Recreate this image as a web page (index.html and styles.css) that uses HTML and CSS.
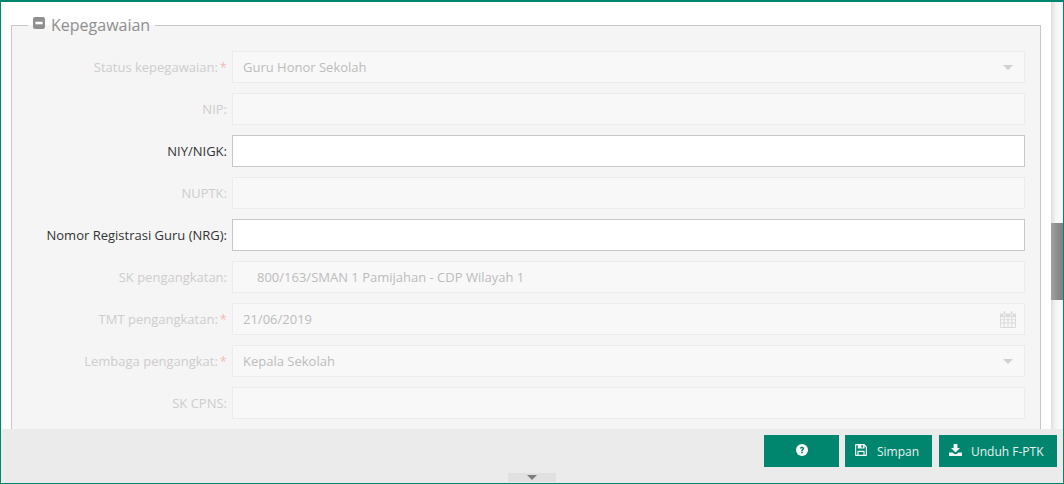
FILE: index.html
```html
<!DOCTYPE html>
<html lang="id">
<head>
<meta charset="utf-8">
<title>Kepegawaian</title>
<link rel="stylesheet" href="styles.css">
</head>
<body>
<div class="frame">
  <div class="content">
    <div class="scroll-area">
      <fieldset class="panel">
        <legend class="panel-legend">
          <svg class="legend-icon" viewBox="0 0 12 12"><rect width="12" height="12" rx="2.2" fill="#8f8f8f"/><rect x="2.4" y="4.7" width="7.2" height="2.6" fill="#fff"/></svg>
          <span>Kepegawaian</span>
        </legend>
        <div class="row off"><label class="lbl">Status kepegawaian:<i class="req">*</i></label><div class="field">Guru Honor Sekolah<svg class="caret" viewBox="0 0 10 5"><path d="M0 0H10L5 5Z"/></svg></div></div>
        <div class="row off"><label class="lbl">NIP:</label><div class="field"></div></div>
        <div class="row"><label class="lbl">NIY/NIGK:</label><input class="field live" type="text"></div>
        <div class="row off"><label class="lbl">NUPTK:</label><div class="field"></div></div>
        <div class="row"><label class="lbl">Nomor Registrasi Guru (NRG):</label><input class="field live" type="text"></div>
        <div class="row off"><label class="lbl">SK pengangkatan:</label><div class="field indent">800/163/SMAN 1 Pamijahan - CDP Wilayah 1</div></div>
        <div class="row off"><label class="lbl">TMT pengangkatan:<i class="req">*</i></label><div class="field">21/06/2019<svg class="cal" viewBox="0 0 16 17"><path fill="#dadada" fill-rule="evenodd" d="M1.2 2.5H3V4.5H6V2.5H10V4.5H13V2.5H14.8A1.2 1.2 0 0 1 16 3.7V15.8A1.2 1.2 0 0 1 14.8 17H1.2A1.2 1.2 0 0 1 0 15.8V3.7A1.2 1.2 0 0 1 1.2 2.5ZM1 6V8.2H3.6V6ZM4.6 6V8.2H7.5V6ZM8.5 6V8.2H11.4V6ZM12.4 6V8.2H15V6ZM1 9.2V11.6H3.6V9.2ZM4.6 9.2V11.6H7.5V9.2ZM8.5 9.2V11.6H11.4V9.2ZM12.4 9.2V11.6H15V9.2ZM1 12.6V16H3.6V12.6ZM4.6 12.6V16H7.5V12.6ZM8.5 12.6V16H11.4V12.6ZM12.4 12.6V16H15V12.6Z"/><rect x="3.6" y="0" width="1.8" height="4" rx=".8" fill="#dadada"/><rect x="10.6" y="0" width="1.8" height="4" rx=".8" fill="#dadada"/></svg></div></div>
        <div class="row off"><label class="lbl">Lembaga pengangkat:<i class="req">*</i></label><div class="field">Kepala Sekolah<svg class="caret" viewBox="0 0 10 5"><path d="M0 0H10L5 5Z"/></svg></div></div>
        <div class="row off"><label class="lbl">SK CPNS:</label><div class="field"></div></div>
      </fieldset>
    </div>
    <div class="scrollbar"><div class="thumb"></div></div>
  </div>
  <footer class="actions">
    <div class="buttons">
      <button class="btn btn-help" type="button"><svg class="ico" viewBox="0 0 12 12"><circle cx="6" cy="6" r="6" fill="#fff"/><path d="M3.9 4.5C4 3.3 4.9 2.7 6 2.7S8.1 3.4 8.1 4.4C8.1 5.7 6.7 5.7 6.7 7H5.2C5.2 5.3 6.4 5.3 6.4 4.5C6.4 4.2 6.2 4 5.9 4S5.4 4.2 5.3 4.7ZM5.2 7.6H6.8V9.2H5.2Z" fill="#00856f"/></svg></button>
      <button class="btn btn-save" type="button"><svg class="ico" viewBox="0 0 12 12"><path fill="#f1f6f4" fill-rule="evenodd" d="M1 0H9.3L12 2.7V11A1 1 0 0 1 11 12H1A1 1 0 0 1 0 11V1A1 1 0 0 1 1 0ZM1.2 1.2V10.8H2.4V6.8H9.6V10.8H10.8V3.2L9.6 2V4.6H2.8V1.2ZM3.6 8V10.8H8.4V8ZM6.4 1.3V3.6H8V1.3Z"/></svg><span>Simpan</span></button>
      <button class="btn btn-dl" type="button"><svg class="ico" viewBox="0 0 13 12"><path fill="#f1f6f4" d="M4.6 0H8.4V4H11L6.5 8.5L2 4H4.6ZM0 8.4H3.6L5.4 10H7.6L9.4 8.4H13V12H0Z"/></svg><span>Unduh F-PTK</span></button>
    </div>
    <div class="drawer"><svg class="drawer-caret" viewBox="0 0 10 5"><path d="M0 0H10L5 5Z"/></svg></div>
  </footer>
</div>
</body>
</html>
```
FILE: styles.css
```css
* { box-sizing: border-box; }
html, body { margin: 0; padding: 0; }
body { font-family: "Open Sans", "Liberation Sans", sans-serif; font-size: 13px; background: #fff; overflow: hidden; }
.frame { width: 1064px; height: 484px; display: flex; flex-direction: column; border: 1px solid #00856f; border-top-width: 2px; overflow: hidden; }
.content { flex: 1; min-height: 0; display: flex; overflow: hidden; }
.scroll-area { flex: 1; min-width: 0; padding: 12px 10px 0; overflow: hidden; }
.panel { margin: 0; padding: 15px 15px 0 0; background: #f5f5f5; border: 1px solid #c8c8c8; min-width: 0; }
.panel-legend { margin-left: 16px; padding: 0 5px; display: flex; align-items: center; gap: 6px; font-size: 16px; line-height: 22px; color: #8f8f8f; }
.legend-icon { width: 12px; height: 12px; margin-top: -4px; }
.row { display: flex; align-items: center; gap: 5px; height: 32px; margin-bottom: 10px; }
.lbl { width: 215px; flex: none; text-align: right; color: #333; white-space: nowrap; }
.off .lbl { color: #cdcdcd; }
.req { font-style: normal; color: #f7b9b5; margin-left: 2px; }
.field { flex: 1; min-width: 0; height: 32px; display: flex; align-items: center; padding: 0 10px; font: inherit; color: #bcbcbc; background: #f8f8f8; border: 1px solid #ececec; }
.indent { padding-left: 24px; }
.live { background: #fff; border-color: #c8c8c8; color: #333; border-radius: 0; outline: none; }
.caret { width: 10px; height: 5px; margin-left: auto; margin-right: 1px; fill: #d0d0d0; }
.cal { width: 16px; height: 17px; margin-left: auto; margin-right: -2px; }
.scrollbar { width: 12px; flex: none; padding-top: 221px; background: linear-gradient(90deg, #dedede, #f4f4f4 40%, #fafafa 80%, #eeeeee); }
.thumb { height: 77px; background: linear-gradient(90deg, #a2a2a2, #8a8a8a 60%, #808080); }
.actions { flex: none; height: 54px; background: #ebebeb; display: flex; flex-direction: column; align-items: center; }
.buttons { align-self: stretch; display: flex; justify-content: flex-end; padding: 6px 6px 0 0; height: 44px; flex: none; }
.btn { height: 32px; border: 0; padding: 0; margin: 0 0 0 6px; background: #00856f; color: #e8f2ef; font: inherit; font-size: 12px; display: flex; align-items: center; justify-content: flex-start; }
.btn-help { width: 75px; justify-content: center; }
.btn-save { width: 87px; padding-left: 10px; gap: 10px; }
.btn-dl { width: 118px; margin-left: 7px; padding-left: 10px; gap: 9px; }
.ico { width: 12px; height: 12px; margin-top: -3px; }
.btn-dl .ico { width: 13px; }
.drawer { width: 48px; height: 9px; background: #e0e0e0; display: flex; align-items: center; justify-content: center; }
.drawer-caret { width: 10px; height: 5px; fill: #7c7c7c; }
```
